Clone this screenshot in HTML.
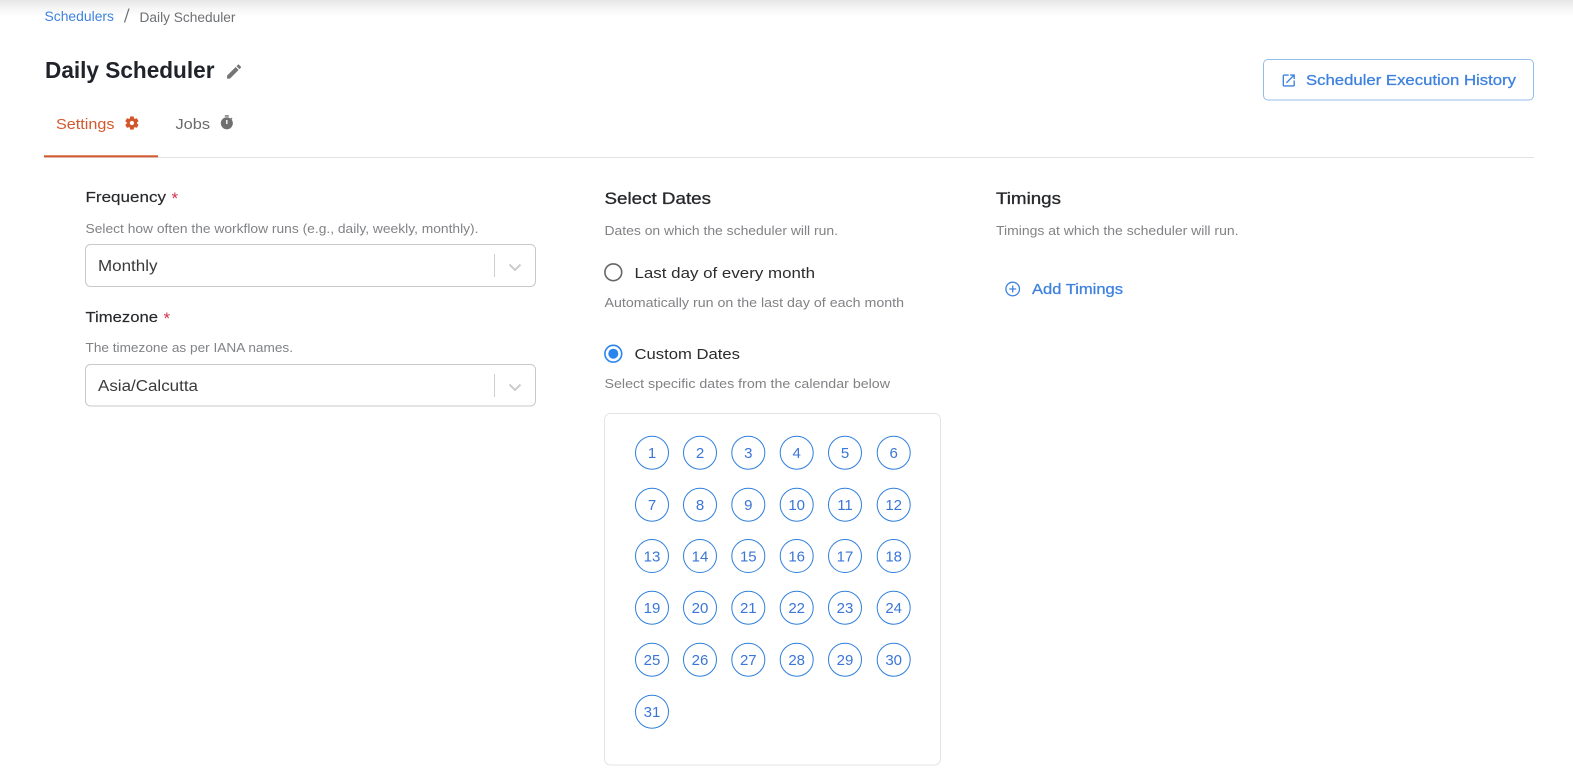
<!DOCTYPE html>
<html lang="en">
<head>
<meta charset="utf-8">
<title>Daily Scheduler</title>
<style>
html,body{margin:0;padding:0;background:#fff;width:1573px;height:778px;overflow:hidden}
svg{display:block}
text{font-family:"Liberation Sans",sans-serif}
.h{fill:#808285;font-size:13px}
.m{stroke-width:.3;paint-order:stroke}
.d{font-size:15px;fill:#3a76d8;text-anchor:middle}
circle.c{fill:#fff;stroke:#2f7fdc;stroke-width:1}
</style>
</head>
<body>
<svg width="1573" height="778" viewBox="0 0 1573 778" xmlns="http://www.w3.org/2000/svg">
<defs>
<linearGradient id="t" x1="0" y1="0" x2="0" y2="1"><stop offset="0" stop-color="#e6e6e6"/><stop offset=".5" stop-color="#f6f6f6"/><stop offset="1" stop-color="#fff"/></linearGradient>
</defs>
<rect width="1573" height="778" fill="#fff"/>
<rect width="1573" height="17" fill="url(#t)"/>

<text x="44.5" y="21" font-size="13.5" fill="#3f82de" textLength="69.5" lengthAdjust="spacingAndGlyphs">Schedulers</text>
<path d="M129 8.5L124.5 22.5" stroke="#6b6b6b" stroke-width="1.2" fill="none"/>
<text x="139.5" y="22" font-size="13.5" fill="#6e7073" textLength="96" lengthAdjust="spacingAndGlyphs">Daily Scheduler</text>

<text x="45" y="78" font-size="23" font-weight="700" fill="#20242a" textLength="169.5" lengthAdjust="spacingAndGlyphs">Daily Scheduler</text>
<path transform="translate(224.7 62.2) scale(.78)" fill="#757575" d="M3 17.25V21h3.75L17.81 9.94l-3.75-3.75L3 17.25zM20.71 7.04c.39-.39.39-1.02 0-1.41l-2.34-2.34c-.39-.39-1.02-.39-1.41 0l-1.83 1.83 3.75 3.75 1.83-1.83z"/>

<text x="56" y="129" font-size="15" fill="#d4592f" textLength="58.5" lengthAdjust="spacingAndGlyphs">Settings</text>
<path transform="translate(123.9 115) scale(.667)" fill="#d4552b" stroke="#d4552b" stroke-width=".8" d="M19.14 12.94c.04-.3.06-.61.06-.94 0-.32-.02-.64-.07-.94l2.03-1.58c.18-.14.23-.41.12-.61l-1.92-3.32c-.12-.22-.37-.29-.59-.22l-2.39.96c-.5-.38-1.03-.7-1.62-.94l-.36-2.54c-.04-.24-.24-.41-.48-.41h-3.84c-.24 0-.43.17-.47.41l-.36 2.54c-.59.24-1.13.57-1.62.94l-2.39-.96c-.22-.08-.47 0-.59.22L2.74 8.87c-.12.21-.08.47.12.61l2.03 1.58c-.05.3-.09.63-.09.94s.02.64.07.94l-2.03 1.58c-.18.14-.23.41-.12.61l1.92 3.32c.12.22.37.29.59.22l2.39-.96c.5.38 1.03.7 1.62.94l.36 2.54c.05.24.24.41.48.41h3.84c.24 0 .44-.17.47-.41l.36-2.54c.59-.24 1.13-.56 1.62-.94l2.39.96c.22.08.47 0 .59-.22l1.92-3.32c.12-.22.07-.47-.12-.61l-2.01-1.58zM12 15.6c-1.98 0-3.6-1.62-3.6-3.6s1.62-3.6 3.6-3.6 3.6 1.62 3.6 3.6-1.62 3.6-3.6 3.6z"/>
<text x="175.5" y="129" font-size="15" fill="#6a6a6a" textLength="34.5" lengthAdjust="spacingAndGlyphs">Jobs</text>
<path transform="translate(218.8 114.6) scale(.67)" fill="#6f6f6f" d="M9 1h6v2H9zM19.03 7.39l1.42-1.42c-.43-.51-.9-.99-1.41-1.41l-1.42 1.42C16.07 4.74 14.12 4 12 4c-4.97 0-9 4.03-9 9s4.02 9 9 9 9-4.03 9-9c0-2.12-.74-4.07-1.97-5.61zM13 14h-2V8h2v6z"/>
<rect x="44" y="157" width="1490" height="1" fill="#e2e2e2"/>
<rect x="44" y="155.3" width="114" height="2" fill="#d2582e"/>

<rect x="1263.5" y="59.5" width="270" height="40.5" rx="4.5" fill="#fff" stroke="#93bde9" stroke-width="1"/>
<path transform="translate(1280.6 72.3) scale(.68)" fill="#3f82de" d="M19 19H5V5h7V3H5c-1.11 0-2 .9-2 2v14c0 1.1.89 2 2 2h14c1.1 0 2-.9 2-2v-7h-2v7zM14 3v2h3.59l-9.83 9.83 1.41 1.41L19 6.41V10h2V3h-7z"/>
<text x="1306" y="85" font-size="15" fill="#3f82de" stroke="#3f82de" class="m" textLength="210" lengthAdjust="spacingAndGlyphs" style="stroke-width:.3">Scheduler Execution History</text>

<text x="85.5" y="202" font-size="15" fill="#26282b" stroke="#26282b" class="m" textLength="80.5" lengthAdjust="spacingAndGlyphs" style="stroke-width:.15">Frequency</text>
<text x="171.5" y="204" font-size="17" fill="#d0324a">*</text>
<text x="85.5" y="233" class="h" textLength="393" lengthAdjust="spacingAndGlyphs">Select how often the workflow runs (e.g., daily, weekly, monthly).</text>
<rect x="85.5" y="244.5" width="450" height="42" rx="5" fill="#fff" stroke="#c9c9c9"/>
<text x="98" y="271" font-size="15.5" fill="#3a3a3a" textLength="59.5" lengthAdjust="spacingAndGlyphs">Monthly</text>
<rect x="494" y="254" width="1" height="23" fill="#cfcfcf"/>
<path d="M509.5 264.5L515 270L520.5 264.5" fill="none" stroke="#cccccc" stroke-width="2"/>

<text x="85.5" y="322" font-size="15" fill="#26282b" stroke="#26282b" class="m" textLength="72.5" lengthAdjust="spacingAndGlyphs" style="stroke-width:.15">Timezone</text>
<text x="163.5" y="324" font-size="17" fill="#d0324a">*</text>
<text x="85.5" y="352" class="h" textLength="207.5" lengthAdjust="spacingAndGlyphs">The timezone as per IANA names.</text>
<rect x="85.5" y="364.5" width="450" height="41.5" rx="5" fill="#fff" stroke="#c9c9c9"/>
<text x="98" y="391" font-size="15.5" fill="#3a3a3a" textLength="100" lengthAdjust="spacingAndGlyphs">Asia/Calcutta</text>
<rect x="494" y="374" width="1" height="23" fill="#cfcfcf"/>
<path d="M509.5 384.5L515 390L520.5 384.5" fill="none" stroke="#cccccc" stroke-width="2"/>

<text x="604.5" y="204" font-size="16.5" fill="#26282b" stroke="#26282b" class="m" textLength="106.5" lengthAdjust="spacingAndGlyphs">Select Dates</text>
<text x="604.5" y="235" class="h" textLength="233.5" lengthAdjust="spacingAndGlyphs">Dates on which the scheduler will run.</text>
<circle cx="613.3" cy="272.3" r="8.4" fill="#fff" stroke="#666" stroke-width="1.6"/>
<text x="634.5" y="278" font-size="15" fill="#2c2c2c" textLength="180.5" lengthAdjust="spacingAndGlyphs">Last day of every month</text>
<text x="604.5" y="307" class="h" textLength="299.5" lengthAdjust="spacingAndGlyphs">Automatically run on the last day of each month</text>
<circle cx="613.3" cy="353.7" r="8.4" fill="#fff" stroke="#2a84ee" stroke-width="1.6"/>
<circle cx="613.3" cy="353.7" r="5" fill="#2a84ee"/>
<text x="634.5" y="359" font-size="15" fill="#2c2c2c" textLength="105.5" lengthAdjust="spacingAndGlyphs">Custom Dates</text>
<text x="604.5" y="388" class="h" textLength="285.5" lengthAdjust="spacingAndGlyphs">Select specific dates from the calendar below</text>

<rect x="604.5" y="413.5" width="336" height="351.5" rx="6" fill="#fff" stroke="#e3e3e3"/>

<circle class="c" cx="652" cy="452.7" r="16.5"/><text class="d" x="652" y="458">1</text>
<circle class="c" cx="700" cy="452.7" r="16.5"/><text class="d" x="700" y="458">2</text>
<circle class="c" cx="748.3" cy="452.7" r="16.5"/><text class="d" x="748.3" y="458">3</text>
<circle class="c" cx="796.7" cy="452.7" r="16.5"/><text class="d" x="796.7" y="458">4</text>
<circle class="c" cx="845" cy="452.7" r="16.5"/><text class="d" x="845" y="458">5</text>
<circle class="c" cx="893.7" cy="452.7" r="16.5"/><text class="d" x="893.7" y="458">6</text>

<circle class="c" cx="652" cy="504.7" r="16.5"/><text class="d" x="652" y="510">7</text>
<circle class="c" cx="700" cy="504.7" r="16.5"/><text class="d" x="700" y="510">8</text>
<circle class="c" cx="748.3" cy="504.7" r="16.5"/><text class="d" x="748.3" y="510">9</text>
<circle class="c" cx="796.7" cy="504.7" r="16.5"/><text class="d" x="796.7" y="510">10</text>
<circle class="c" cx="845" cy="504.7" r="16.5"/><text class="d" x="845" y="510">11</text>
<circle class="c" cx="893.7" cy="504.7" r="16.5"/><text class="d" x="893.7" y="510">12</text>

<circle class="c" cx="652" cy="556" r="16.5"/><text class="d" x="652" y="561.3">13</text>
<circle class="c" cx="700" cy="556" r="16.5"/><text class="d" x="700" y="561.3">14</text>
<circle class="c" cx="748.3" cy="556" r="16.5"/><text class="d" x="748.3" y="561.3">15</text>
<circle class="c" cx="796.7" cy="556" r="16.5"/><text class="d" x="796.7" y="561.3">16</text>
<circle class="c" cx="845" cy="556" r="16.5"/><text class="d" x="845" y="561.3">17</text>
<circle class="c" cx="893.7" cy="556" r="16.5"/><text class="d" x="893.7" y="561.3">18</text>

<circle class="c" cx="652" cy="607.7" r="16.5"/><text class="d" x="652" y="613">19</text>
<circle class="c" cx="700" cy="607.7" r="16.5"/><text class="d" x="700" y="613">20</text>
<circle class="c" cx="748.3" cy="607.7" r="16.5"/><text class="d" x="748.3" y="613">21</text>
<circle class="c" cx="796.7" cy="607.7" r="16.5"/><text class="d" x="796.7" y="613">22</text>
<circle class="c" cx="845" cy="607.7" r="16.5"/><text class="d" x="845" y="613">23</text>
<circle class="c" cx="893.7" cy="607.7" r="16.5"/><text class="d" x="893.7" y="613">24</text>

<circle class="c" cx="652" cy="659.7" r="16.5"/><text class="d" x="652" y="665">25</text>
<circle class="c" cx="700" cy="659.7" r="16.5"/><text class="d" x="700" y="665">26</text>
<circle class="c" cx="748.3" cy="659.7" r="16.5"/><text class="d" x="748.3" y="665">27</text>
<circle class="c" cx="796.7" cy="659.7" r="16.5"/><text class="d" x="796.7" y="665">28</text>
<circle class="c" cx="845" cy="659.7" r="16.5"/><text class="d" x="845" y="665">29</text>
<circle class="c" cx="893.7" cy="659.7" r="16.5"/><text class="d" x="893.7" y="665">30</text>

<circle class="c" cx="652" cy="711.7" r="16.5"/><text class="d" x="652" y="717">31</text>

<text x="996" y="204" font-size="16.5" fill="#26282b" stroke="#26282b" class="m" textLength="65" lengthAdjust="spacingAndGlyphs">Timings</text>
<text x="996" y="235" class="h" textLength="242.5" lengthAdjust="spacingAndGlyphs">Timings at which the scheduler will run.</text>
<circle cx="1012.7" cy="289" r="6.8" fill="none" stroke="#3f82de" stroke-width="1.3"/>
<path d="M1012.7 285.5V292.5M1009.2 289H1016.2" stroke="#3f82de" stroke-width="1.3" fill="none"/>
<text x="1032" y="294" font-size="15" fill="#3f82de" stroke="#3f82de" class="m" textLength="91" lengthAdjust="spacingAndGlyphs" style="stroke-width:.3">Add Timings</text>
</svg>
</body>
</html>
